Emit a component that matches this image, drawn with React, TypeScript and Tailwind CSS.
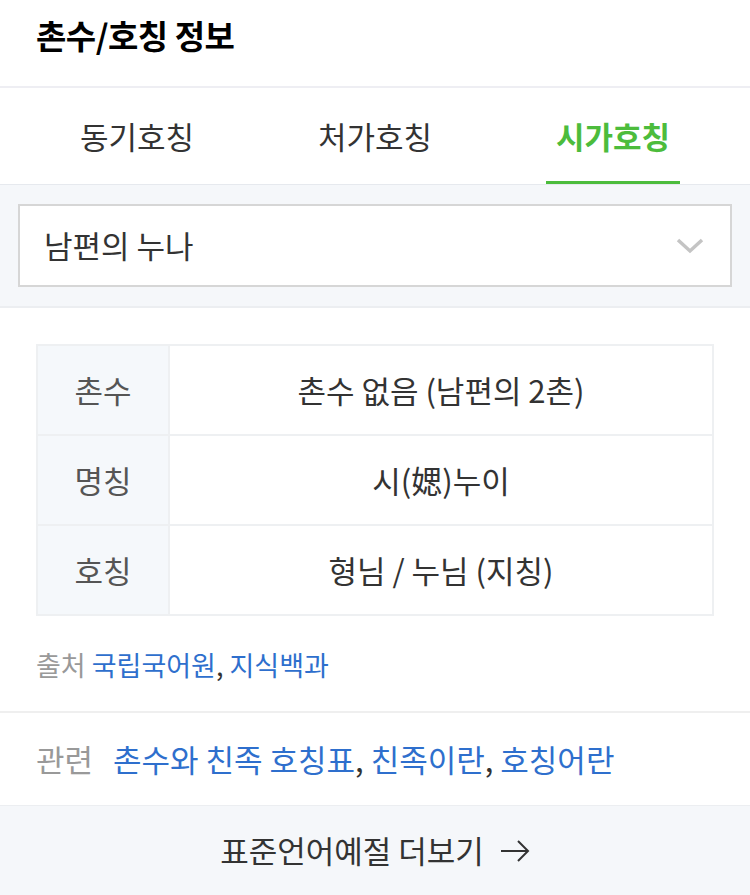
import { useState } from 'react';

const tabs = ['동기호칭', '처가호칭', '시가호칭'];

const rows = [
  { label: '촌수', value: '촌수 없음 (남편의 2촌)' },
  { label: '명칭', value: '시(媤)누이' },
  { label: '호칭', value: '형님 / 누님 (지칭)' },
];

export default function App() {
  const [active, setActive] = useState(2);

  return (
    <div className="w-[750px] min-h-[895px] bg-white font-['Noto_Sans_CJK_KR','Noto_Sans',sans-serif] text-[#333]">
      <div className="h-[88px] border-b-2 border-[#eeeef3] pl-[36px] pt-[12px]">
        <h1 className="text-[33px] leading-[46px] font-bold text-black tracking-[-0.5px]">촌수/호칭 정보</h1>
      </div>

      <div className="flex h-[97px] px-[18px] border-b border-[#e6e9ee]">
        {tabs.map((t, i) => (
          <button key={t} onClick={() => setActive(i)} className="flex-1 flex justify-center">
            <span
              className={
                i === active
                  ? 'flex items-center h-full px-[10px] border-b-[3px] border-[#4cbc3c] pt-[3px] text-[31px] font-bold text-[#4cbc3c]'
                  : 'flex items-center h-full px-[10px] border-b-[3px] border-transparent pt-[3px] text-[31px] text-[#333]'
              }
            >
              {t}
            </span>
          </button>
        ))}
      </div>

      <div className="bg-[#f5f7fa] px-[18px] pt-[19px] pb-[19px] border-b-2 border-[#eceef1]">
        <div className="h-[83px] flex items-center justify-between border-2 border-[#d6d6d6] bg-white pl-[24px] pr-[26px]">
          <span className="text-[31px] text-[#333]">남편의 누나</span>
          <svg width="28" height="18" viewBox="0 0 28 18" fill="none">
            <path d="M2 3 L14 14 L26 3" stroke="#c4c4c4" strokeWidth="3.5" />
          </svg>
        </div>
      </div>

      <div className="px-[36px] pt-[36px] pb-[27px] border-b-2 border-[#efefef]">
        <div className="border-2 border-[#eef0f2]">
          {rows.map((r, i) => (
            <div key={r.label} className={i > 0 ? 'flex h-[90px] border-t-2 border-[#eef0f2]' : 'flex h-[88px]'}>
              <div className="w-[132px] flex items-center justify-center bg-[#f5f8fb] border-r-2 border-[#eef0f2] text-[31px] text-[#555]">
                {r.label}
              </div>
              <div className="flex-1 flex items-center justify-center text-[31px] text-[#333]">{r.value}</div>
            </div>
          ))}
        </div>
        <p className="mt-[30px] text-[27px] leading-[38px] text-[#999]">
          출처 <span className="text-[#2e6fcd]">국립국어원</span>
          <span className="text-[#333]">, </span>
          <span className="text-[#2e6fcd]">지식백과</span>
        </p>
      </div>

      <div className="h-[92px] flex items-center pl-[36px] text-[31px]">
        <span className="text-[#999] mr-[20px]">관련</span>
        <span className="text-[#2e6fcd]">촌수와 친족 호칭표</span>
        <span className="text-[#333]">,&nbsp;</span>
        <span className="text-[#2e6fcd]">친족이란</span>
        <span className="text-[#333]">,&nbsp;</span>
        <span className="text-[#2e6fcd]">호칭어란</span>
      </div>

      <div className="h-[90px] flex items-center justify-center gap-[16px] bg-[#f5f7fa] border-t border-[#eceef1] text-[31px] text-[#333]">
        <span>표준언어예절 더보기</span>
        <svg width="30" height="24" viewBox="0 0 30 24" fill="none">
          <path d="M1 12 H28 M18 2 L28 12 L18 22" stroke="#333" strokeWidth="2" />
        </svg>
      </div>
    </div>
  );
}
